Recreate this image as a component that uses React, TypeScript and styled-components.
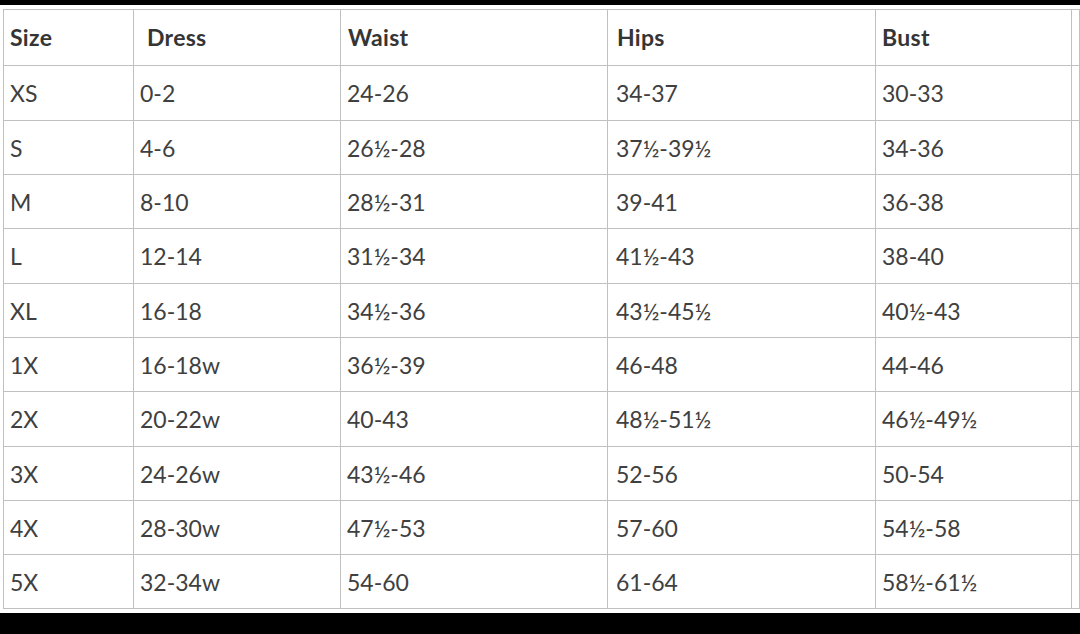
import React from "react";
import styled, { createGlobalStyle } from "styled-components";

const Global = createGlobalStyle`
  html, body {
    margin: 0;
    padding: 0;
    background: #000;
  }
  #root {
    width: 1080px;
    height: 634px;
    overflow: hidden;
  }
`;

const Frame = styled.div`
  box-sizing: border-box;
  width: 1080px;
  height: 634px;
  padding: 5px 0 21px;
  background: #000;
`;

const Sheet = styled.div`
  box-sizing: border-box;
  height: 608px;
  background: #fff;
  padding: 4px 0 0 3px;
  overflow: hidden;
`;

const Grid = styled.div`
  display: grid;
  grid-template-columns: 130px 207px 267px 268px 196px 1fr;
  border-top: 1px solid #c0c0c0;
  border-left: 1px solid #c0c0c0;
  font-family: "Lato", "Liberation Sans", sans-serif;
`;

const Cell = styled.div<{ $h: number; $head?: boolean; $indent?: number }>`
  box-sizing: border-box;
  height: ${(p) => p.$h}px;
  border-right: 1px solid #c0c0c0;
  border-bottom: 1px solid #c0c0c0;
  display: flex;
  align-items: center;
  padding-left: ${(p) => 6 + (p.$indent ?? 0)}px;
  padding-bottom: ${(p) => (p.$head ? 1 : 0)}px;
  font-size: 23px;
  font-weight: ${(p) => (p.$head ? 700 : 400)};
  color: ${(p) => (p.$head ? "#353535" : "#404040")};
  white-space: nowrap;
  letter-spacing: ${(p) => (p.$head ? "0.3px" : "0")};
`;

const headers = ["Size", "Dress", "Waist", "Hips", "Bust", ""];
const headIndent = [0, 7, 1, 3, 0, 0];

const rows: string[][] = [
  ["XS", "0-2", "24-26", "34-37", "30-33"],
  ["S", "4-6", "26½-28", "37½-39½", "34-36"],
  ["M", "8-10", "28½-31", "39-41", "36-38"],
  ["L", "12-14", "31½-34", "41½-43", "38-40"],
  ["XL", "16-18", "34½-36", "43½-45½", "40½-43"],
  ["1X", "16-18w", "36½-39", "46-48", "44-46"],
  ["2X", "20-22w", "40-43", "48½-51½", "46½-49½"],
  ["3X", "24-26w", "43½-46", "52-56", "50-54"],
  ["4X", "28-30w", "47½-53", "57-60", "54½-58"],
  ["5X", "32-34w", "54-60", "61-64", "58½-61½"],
];

const rowHeights = [55, 54, 54, 55, 54, 54, 55, 54, 54, 54];

export default function App() {
  return (
    <>
      <Global />
      <Frame>
        <Sheet>
          <Grid>
            {headers.map((h, i) => (
              <Cell key={"h" + i} $h={56} $head $indent={headIndent[i]}>
                {h}
              </Cell>
            ))}
            {rows.map((r, ri) =>
              [...r, ""].map((c, ci) => (
                <Cell key={ri + "-" + ci} $h={rowHeights[ri]} $indent={ci === 3 ? 2 : 0}>
                  {c}
                </Cell>
              ))
            )}
          </Grid>
        </Sheet>
      </Frame>
    </>
  );
}
